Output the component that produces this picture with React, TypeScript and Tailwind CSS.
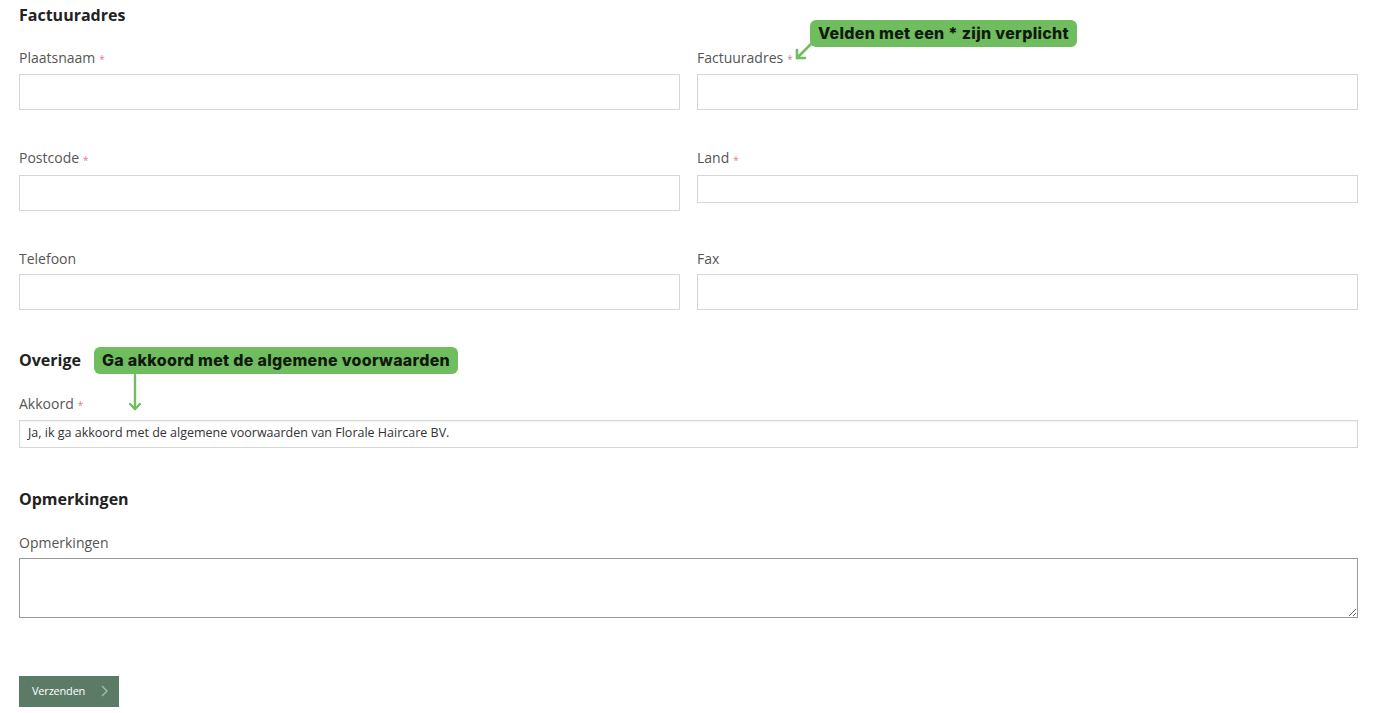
const labelCls = "block text-[14px] leading-[18px] text-[#555] mb-[6px]";
const inputCls = "block w-full border border-[#d6d6d6] bg-white outline-none";
const headCls = "text-[16px] leading-[20px] font-bold text-[#222]";

function Req() {
    return <span className="text-[#e37b8e] text-[10px] ml-[4px] align-middle">*</span>;
}

function Field({ label, required, h = "h-[36px]" }: { label: string; required?: boolean; h?: string }) {
    return (
        <div>
            <label className={labelCls}>
                {label}
                {required && <Req />}
            </label>
            <input className={`${inputCls} ${h}`} />
        </div>
    );
}

const note = "rounded-[6px] bg-[#70bd5f] text-[#101a0c] font-extrabold text-[16px] tracking-[0.3px] leading-[27px] h-[27px] px-[8px] whitespace-nowrap";

export default function App() {
    return (
        <div
            className="relative bg-white min-h-[713px] pl-[19px] pr-[28px] pt-[5px]"
            style={{ fontFamily: '"Open Sans", "Noto Sans", sans-serif' }}
        >
            <h2 className={headCls}>Factuuradres</h2>

            <div className="grid grid-cols-2 gap-x-[17px] gap-y-[39px] mt-[24px] items-start">
                <Field label="Plaatsnaam" required />
                <Field label="Factuuradres" required />
                <Field label="Postcode" required />
                <Field label="Land" required h="h-[28px]" />
                <Field label="Telefoon" />
                <Field label="Fax" />
            </div>

            <div className="flex items-center gap-[13px] mt-[37px]">
                <h2 className={headCls}>Overige</h2>
                <div className={note} style={{ fontFamily: 'Inter, "Noto Sans", sans-serif' }}>
                    Ga akkoord met de algemene voorwaarden
                </div>
            </div>

            <div className="mt-[21px]">
                <label className={labelCls}>
                    Akkoord
                    <Req />
                </label>
                <div className="h-[28px] border border-[#d6d6d6] shadow-[inset_0_1px_2px_rgba(0,0,0,0.06)] flex items-center px-[8px] text-[12.5px] text-[#333]">
                    Ja, ik ga akkoord met de algemene voorwaarden van Florale Haircare BV.
                </div>
            </div>

            <h2 className={`${headCls} mt-[41px]`}>Opmerkingen</h2>

            <div className="mt-[25px]">
                <label className={labelCls}>Opmerkingen</label>
                <textarea className="block w-full h-[60px] border border-[#999] bg-white outline-none resize-y" />
            </div>

            <button className="mt-[58px] w-[100px] h-[31px] bg-[#5b7b66] text-white text-[11px] flex items-center pl-[13px] gap-[16px]">
                <span className="tracking-[-0.2px]">Verzenden</span>
                <svg width="7" height="12" viewBox="0 0 7 12" fill="none" stroke="#a9bcaf" strokeWidth="1.3">
                    <path d="M1 1l5 5-5 5" />
                </svg>
            </button>

            {/* annotation: verplichte velden */}
            <div
                className={`absolute left-[810px] top-[20px] ${note}`}
                style={{ fontFamily: 'Inter, "Noto Sans", sans-serif' }}
            >
                Velden met een * zijn verplicht
            </div>
            <svg className="absolute left-[792px] top-[40px]" width="24" height="22" viewBox="0 0 24 22" fill="none" stroke="#70bd5f" strokeWidth="2.6" strokeLinecap="round" strokeLinejoin="round">
                <path d="M20 3L5 18" />
                <path d="M5 10v8h8" />
            </svg>

            {/* annotation: akkoord pijl */}
            <svg className="absolute left-[127px] top-[374px]" width="16" height="38" viewBox="0 0 16 38" fill="none" stroke="#70bd5f" strokeWidth="2.4" strokeLinecap="round" strokeLinejoin="round">
                <path d="M8 1v34" />
                <path d="M3 30l5 5 5-5" />
            </svg>
        </div>
    );
}
